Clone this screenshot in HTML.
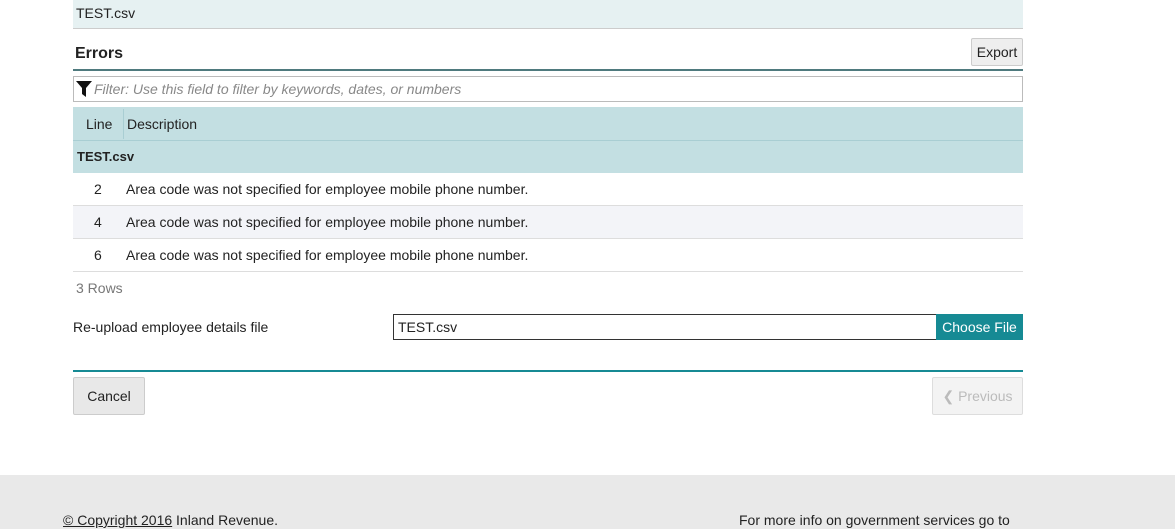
<!DOCTYPE html>
<html><head><style>
body{margin:0;width:1175px;height:529px;overflow:hidden;background:#fff;font-family:"Liberation Sans",sans-serif;font-size:14px;color:#222;position:relative}
.a{position:absolute}
</style></head><body>
<div class="a" style="left:73px;top:0;width:950px;height:28px;background:#e6f1f2;border-bottom:1px solid #ccc"></div>
<div class="a" style="left:76px;top:5px">TEST.csv</div>
<div class="a" style="left:75px;top:45px;font-size:16px;font-weight:bold">Errors</div>
<div class="a" style="left:971px;top:38px;width:50px;height:26px;background:#eee;border:1px solid #ccc;border-radius:2px;text-align:center;line-height:26px">Export</div>
<div class="a" style="left:73px;top:69px;width:950px;height:2px;background:#4f7a7e"></div>
<div class="a" style="left:73px;top:76px;width:948px;height:24px;border:1px solid #bbb"></div>
<svg class="a" style="left:76px;top:81px" width="16" height="16" viewBox="0 0 16 16"><path d="M0 0H16L10 7V16L6 13V7Z" fill="#111"/></svg>
<div class="a" style="left:94px;top:81px;color:#888;font-style:italic">Filter: Use this field to filter by keywords, dates, or numbers</div>
<div class="a" style="left:73px;top:107px;width:950px;height:66px;background:#c3dfe2"></div>
<div class="a" style="left:73px;top:140px;width:950px;height:1px;background:#a9ced3"></div>
<div class="a" style="left:123px;top:109px;width:1px;height:30px;background:#a9ced3"></div>
<div class="a" style="left:86px;top:116px">Line</div>
<div class="a" style="left:127px;top:116px">Description</div>
<div class="a" style="left:77px;top:149px;font-weight:bold;font-size:13px">TEST.csv</div>
<div class="a" style="left:73px;top:205px;width:950px;height:1px;background:#ddd"></div>
<div class="a" style="left:73px;top:206px;width:950px;height:32px;background:#f3f4f8"></div>
<div class="a" style="left:73px;top:238px;width:950px;height:1px;background:#ddd"></div>
<div class="a" style="left:73px;top:271px;width:950px;height:1px;background:#ddd"></div>
<div class="a" style="left:94px;top:181px">2</div><div class="a" style="left:126px;top:181px">Area code was not specified for employee mobile phone number.</div>
<div class="a" style="left:94px;top:214px">4</div><div class="a" style="left:126px;top:214px">Area code was not specified for employee mobile phone number.</div>
<div class="a" style="left:94px;top:247px">6</div><div class="a" style="left:126px;top:247px">Area code was not specified for employee mobile phone number.</div>
<div class="a" style="left:76px;top:280px;color:#777">3 Rows</div>
<div class="a" style="left:73px;top:319px">Re-upload employee details file</div>
<div class="a" style="left:393px;top:314px;width:542px;height:24px;border:1px solid #333;border-right:none"></div>
<div class="a" style="left:398px;top:319px">TEST.csv</div>
<div class="a" style="left:936px;top:314px;width:87px;height:26px;background:#168a94;color:#fff;text-align:center;line-height:26px">Choose File</div>
<div class="a" style="left:73px;top:370px;width:950px;height:2px;background:#168a94"></div>
<div class="a" style="left:73px;top:377px;width:70px;height:36px;background:#e8e8e8;border:1px solid #ccc;border-radius:2px;text-align:center;line-height:36px">Cancel</div>
<div class="a" style="left:932px;top:377px;width:89px;height:36px;background:#f3f3f3;border:1px solid #ddd;border-radius:2px;color:#bbb;text-align:center;line-height:36px">&#10094; Previous</div>
<div class="a" style="left:0;top:475px;width:1175px;height:54px;background:#e9e9e9"></div>
<div class="a" style="left:63px;top:512px"><u>© Copyright 2016</u> Inland Revenue.</div>
<div class="a" style="left:739px;top:512px">For more info on government services go to</div>
</body></html>
